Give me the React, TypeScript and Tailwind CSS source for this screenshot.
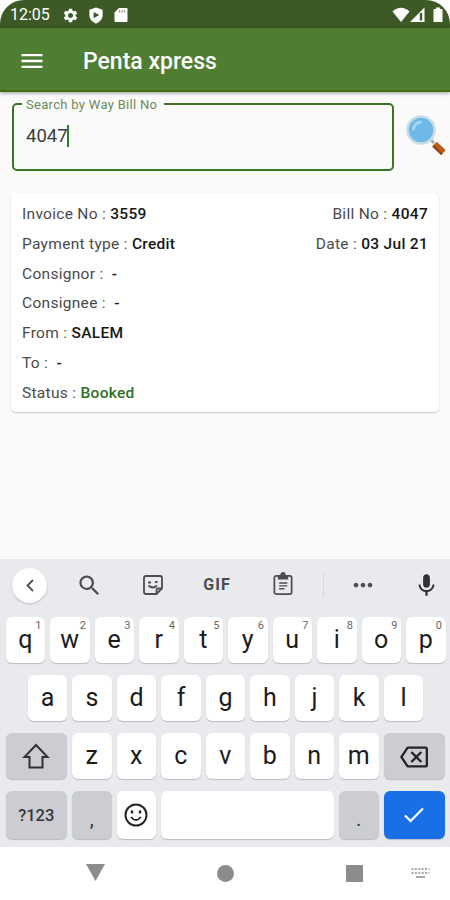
import type { ReactNode } from "react";
import {
  MdMenu,
  MdMic,
  MdMoreHoriz,
  MdOutlineBackspace,
  MdSearch,
  MdSettings,
} from "react-icons/md";
import clsx from "clsx";

const TOP_ROW = "qwertyuiop".split("");
const HOME_ROW = "asdfghjkl".split("");
const BOTTOM_ROW = "zxcvbnm".split("");

function StatusBar() {
  return (
    <div className="flex h-7 shrink-0 items-center rounded-t-[24px] bg-[#3d5a26] pt-[2px] pr-[7px] pl-[10px] text-white">
      <span className="w-[52px] text-[16px] leading-5">12:05</span>
      <MdSettings className="h-[17px] w-[17px]" />
      <svg viewBox="0 0 16 18" className="ml-[9px] h-[17px] w-4">
        <path fill="#fff" d="M8 0.5 15 3v5.5c0 4-3 7.5-7 9-4-1.500-7-5-7-9V3z" />
        <path fill="#3d5a26" d="M5.500 5.200 11.500 8.600 5.500 12z" />
      </svg>
      <svg viewBox="0 0 14 16" className="ml-[10px] h-4 w-[14px]">
        <path fill="#fff" d="M5 1h7.500q1 0 1 1v12q0 1-1 1h-11q-1 0-1-1V5.500z" />
        <path stroke="#8b9c7c" strokeWidth="1.200" d="M5.500 3v2.500M8 3v2.500M10.500 3v2.500" />
      </svg>
      <svg viewBox="0 0 18 16" className="-mt-px ml-auto h-4 w-[18px]">
        <path fill="#fff" d="M0.500 4.500Q9-3 17.500 4.500L9 15z" />
      </svg>
      <svg viewBox="0 0 15 16" className="-mt-px h-4 w-[15px]">
        <path fill="#fff" d="M14.500 0.500V15H0z" />
        <path fill="#3d5a26" d="M9.800 6h2.400v7.500H9.800z" />
      </svg>
      <svg viewBox="0 0 10 16" className="-mt-px ml-[8px] h-4 w-[10px]">
        <path fill="#fff" d="M3 0.500h4V2h1.500q1 0 1 1v12h-9V3q0-1 1-1H3z" />
      </svg>
    </div>
  );
}

function Field({ label, value, green }: { label: string; value: string; green?: boolean }) {
  return (
    <p className="whitespace-pre text-[#4a4a4a]">
      {label} : <span className={clsx("font-medium", green ? "text-[#2f701f]" : "text-[#161616]")}>{value}</span>
    </p>
  );
}

function Key({ children, className, hint }: { children?: ReactNode; className?: string; hint?: number }) {
  return (
    <div
      className={clsx(
        "relative flex shrink-0 items-center justify-center rounded-[6px] shadow-[0_1px_1px_#b9bbbf]",
        className ?? "h-[46px] w-[39.5px] bg-white"
      )}
    >
      {children}
      {hint !== undefined && (
        <span className="absolute top-[2px] right-[3.5px] text-[11px] leading-[14px] text-[#666]">{hint}</span>
      )}
    </div>
  );
}

function Letter({ char, hint }: { char: string; hint?: number }) {
  return (
    <Key hint={hint}>
      <span className="pb-px text-[25px] leading-[30px] text-[#1c1c1c]">{char}</span>
    </Key>
  );
}

function Toolbar() {
  return (
    <div className="flex h-[52px] items-center pl-3 text-[#4b4d50]">
      <div className="flex h-[35px] w-[35px] items-center justify-center rounded-full bg-white shadow-[0_1px_2px_#b9bbbf]">
        <svg viewBox="0 0 8 13" className="h-[13px] w-2" fill="none" stroke="currentColor" strokeWidth="1.800">
          <path d="M7 1 1.500 6.500 7 12" />
        </svg>
      </div>
      <MdSearch className="ml-[29px] h-[27px] w-[27px]" />
      <svg viewBox="0 0 20 20" className="ml-[40px] h-5 w-5" fill="none" stroke="currentColor" strokeWidth="1.800">
        <path d="M3 1h14q2 0 2 2v10.500L13.500 19H3q-2 0-2-2V3q0-2 2-2zM13.500 18.500v-3q0-2 2-2h3" />
        <path d="M5 7.500h3M12 7h2.500M5.500 10.500q4.500 4 8.500 0" />
      </svg>
      <span className="ml-[40px] w-7 text-center text-[16px] leading-5 font-bold tracking-[1px]">GIF</span>
      <svg viewBox="0 0 20 24" className="-mt-[3px] ml-[42px] h-[23px] w-5" fill="none" stroke="currentColor" strokeWidth="1.800">
        <rect x="1" y="4" width="18" height="19" rx="2" />
        <path fill="currentColor" d="M5.500 4H8q0-3 2-3t2 3h2.500v3h-9z" />
        <path strokeWidth="1.500" d="M6 11.500h8.500M6 14.500h8.500M6 17.500h5.500" />
      </svg>
      <span className="ml-[30px] h-6 w-px bg-[#d5d7da]" />
      <MdMoreHoriz className="ml-[25px] h-7 w-7" />
      <MdMic className="ml-[36px] h-[27px] w-[27px] text-[#303134]" />
    </div>
  );
}

function Keyboard() {
  return (
    <div className="h-[288px] shrink-0 bg-[#e8eaed]">
      <Toolbar />
      <div className="flex flex-col gap-3 px-[5.500px] pt-[6px]">
        <div className="flex gap-[5px]">
          {TOP_ROW.map((char, i) => (
            <Letter key={char} char={char} hint={(i + 1) % 10} />
          ))}
        </div>
        <div className="flex justify-center gap-[5px] pl-px">
          {HOME_ROW.map((char) => (
            <Letter key={char} char={char} />
          ))}
        </div>
        <div className="flex gap-[5px]">
          <Key className="h-[46px] w-[61.500px] bg-[#cbcdd2]">
            <svg viewBox="0 0 28 26" className="h-[26px] w-7" fill="none" stroke="#303134" strokeWidth="2">
              <path d="M14 2 2.500 14H7.500V24.500h13V14h5z" />
            </svg>
          </Key>
          {BOTTOM_ROW.map((char) => (
            <Letter key={char} char={char} />
          ))}
          <Key className="h-[46px] w-[61.500px] bg-[#cbcdd2]">
            <MdOutlineBackspace className="mt-[2px] h-7 w-7 text-[#242528]" />
          </Key>
        </div>
        <div className="flex gap-[5px]">
          <Key className="h-[48px] w-[61.500px] bg-[#cbcdd2]">
            <span className="pt-[2px] text-[16.500px] font-medium text-[#35373a]">?123</span>
          </Key>
          <Key className="h-[48px] w-[39.500px] bg-[#cbcdd2]">
            <span className="pt-2 text-[20px] text-[#35373a]">,</span>
          </Key>
          <Key className="h-[48px] w-[39.500px] bg-white">
            <svg viewBox="0 0 24 24" className="h-6 w-6" fill="none" stroke="#242528" strokeWidth="2">
              <circle cx="12" cy="12" r="10.500" />
              <path strokeWidth="1.800" d="M7 14q5 6 10 0" />
              <path strokeWidth="2.400" d="M8 7.500v3M16 7.500v3" />
            </svg>
          </Key>
          <Key className="h-[48px] w-[173px] bg-white" />
          <Key className="h-[48px] w-[39.500px] bg-[#cbcdd2]">
            <span className="pt-2 text-[20px] text-[#35373a]">.</span>
          </Key>
          <Key className="h-[48px] w-[61.500px] bg-[#1970e6]">
            <svg viewBox="0 0 20 16" className="h-4 w-5" fill="none" stroke="#fff" strokeWidth="2.200">
              <path d="M1 8.500 6.500 14 19 1.500" />
            </svg>
          </Key>
        </div>
      </div>
    </div>
  );
}

function NavBar() {
  return (
    <div className="flex h-[53px] shrink-0 items-center bg-white pl-[86px] text-[#8c8c8c]">
      <svg viewBox="0 0 19 17" className="-mt-[3px] h-[17px] w-[19px]">
        <path fill="currentColor" d="M0 0h19L9.500 17z" />
      </svg>
      <span className="ml-[112px] h-[17px] w-[17px] rounded-full bg-[#8c8c8c]" />
      <span className="ml-[112px] h-[17px] w-[17px] bg-[#8c8c8c]" />
      <svg viewBox="0 0 19 11" className="ml-[48px] h-[11px] w-[19px]" stroke="currentColor" strokeWidth="1.500">
        <path strokeDasharray="2 1.400" d="M0.500 1h18M0.500 5h18" />
        <path d="M5 9h9" />
      </svg>
    </div>
  );
}

export default function App() {
  return (
    <div className="flex h-[900px] w-[450px] flex-col overflow-hidden bg-white font-['Roboto',sans-serif]">
      <StatusBar />
      <header className="z-10 flex h-[64px] shrink-0 items-center border-b-2 border-[#3d6f0c] bg-[#4f7d31] pl-[18px] text-white shadow-[0_1px_4px_#0006]">
        <MdMenu className="mt-[3px] h-7 w-7" />
        <h1 className="mt-[6px] ml-[37px] text-[23px] font-medium">Penta xpress</h1>
      </header>

      <main className="flex-1 bg-[#fafafa]">
        <div className="flex pt-1 pl-3">
          <fieldset className="h-[75px] w-[382px] rounded-[5px] border-2 border-[#397523] px-2">
            <legend className="h-4 w-[142px] pl-1 text-[13px] leading-[18px] tracking-[0.3px] text-[#6c8b57]">
              Search by Way Bill No
            </legend>
            <div className="mt-[12px] flex items-center pl-1">
              <span className="text-[18.500px] leading-6 text-[#3c3c3c]">4047</span>
              <span className="-ml-px h-[22px] w-[2px] bg-[#2c7a2a]" />
            </div>
          </fieldset>
          <svg viewBox="0 0 41 41" className="mt-[18px] ml-[12px] h-[41px] w-[41px]">
            <path stroke="#9aa7ae" strokeWidth="2.500" d="m24 25 4 4" />
            <path stroke="#bd5b17" strokeWidth="6.500" d="m28.500 30 9 8.500" />
            <path stroke="#8e4210" strokeWidth="2" d="m27 32 9 8.500" />
            <circle cx="15" cy="16" r="13.500" fill="#6fb8ea" stroke="#c9dce5" strokeWidth="2.600" />
            <path fill="none" stroke="#a6d5f4" strokeWidth="3" strokeLinecap="round" d="M7.500 15q1-6 7-7" />
          </svg>
        </div>

        <section className="mx-[11px] mt-[22px] h-[219px] rounded-[5px] bg-white pt-[7px] pr-[11px] pl-[11px] text-[15.500px] leading-[29.800px] tracking-[0.300px] shadow-[0_1px_2px_#0003]">
          <div className="flex justify-between">
            <Field label="Invoice No" value="3559" />
            <Field label="Bill No" value="4047" />
          </div>
          <div className="flex justify-between">
            <Field label="Payment type" value="Credit" />
            <Field label="Date" value="03 Jul 21" />
          </div>
          <Field label="Consignor" value=" -" />
          <Field label="Consignee" value=" -" />
          <Field label="From" value="SALEM" />
          <Field label="To" value=" -" />
          <Field label="Status" value="Booked" green />
        </section>
      </main>

      <Keyboard />
      <NavBar />
    </div>
  );
}
